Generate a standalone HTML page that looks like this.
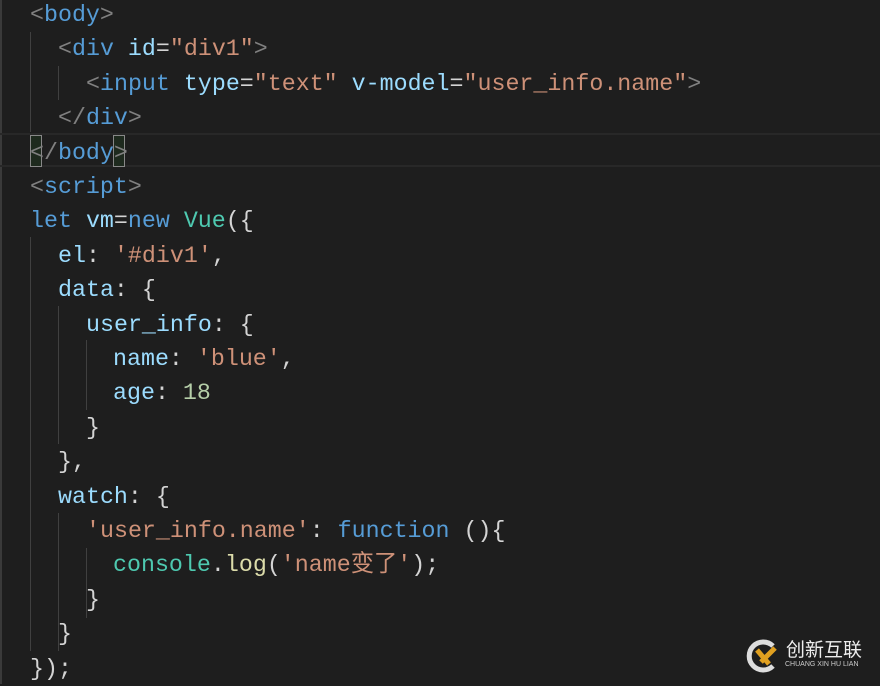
<!DOCTYPE html><html><head><meta charset="utf-8"><style>
body{margin:0;width:880px;height:684px;background:#1e1e1e;overflow:hidden;position:relative;font-family:"Liberation Mono","Noto Sans CJK SC",monospace;font-size:23.3px}
.l{position:absolute;left:30px;height:34.4px;line-height:34.4px;white-space:pre;color:#d4d4d4;margin-top:2px}
.t{color:#808080}.k{color:#569cd6}.a{color:#9cdcfe}.s{color:#ce9178}.n{color:#b5cea8}.f{color:#dcdcaa}.c{color:#4ec9b0}
.g{position:absolute;width:1px;background:#404040}
.hl{position:absolute;left:0;right:0;top:133px;height:34px;border-top:2px solid #282828;border-bottom:2px solid #282828;box-sizing:border-box}
.br{position:absolute;top:135px;width:12px;height:32px;border:1px solid #888;background:#1e2a1e;box-sizing:border-box}
</style></head><body>
<div style="position:absolute;left:0;top:0;width:2px;height:684px;background:#3a3a3a"></div>
<div class="hl"></div>
<div class="br" style="left:30px"></div><div class="br" style="left:113px"></div>
<div class="g" style="left:30px;top:32px;height:100px"></div>
<div class="g" style="left:58px;top:66px;height:34px"></div>
<div class="g" style="left:30px;top:237px;height:414px"></div>
<div class="g" style="left:58px;top:306px;height:138px"></div>
<div class="g" style="left:86px;top:340px;height:70px"></div>
<div class="g" style="left:58px;top:513px;height:138px"></div>
<div class="g" style="left:86px;top:548px;height:70px"></div>
<div class="l" style="top:-4px"><span class="t">&lt;</span><span class="k">body</span><span class="t">&gt;</span></div>
<div class="l" style="top:30.4px;left:58px"><span class="t">&lt;</span><span class="k">div</span> <span class="a">id</span>=<span class="s">"div1"</span><span class="t">&gt;</span></div>
<div class="l" style="top:64.8px;left:86px"><span class="t">&lt;</span><span class="k">input</span> <span class="a">type</span>=<span class="s">"text"</span> <span class="a">v-model</span>=<span class="s">"user_info.name"</span><span class="t">&gt;</span></div>
<div class="l" style="top:99.2px;left:58px"><span class="t">&lt;/</span><span class="k">div</span><span class="t">&gt;</span></div>
<div class="l" style="top:133.6px"><span class="t">&lt;/</span><span class="k">body</span><span class="t">&gt;</span></div>
<div class="l" style="top:168px"><span class="t">&lt;</span><span class="k">script</span><span class="t">&gt;</span></div>
<div class="l" style="top:202.4px"><span class="k">let</span> <span class="a">vm</span>=<span class="k">new</span> <span class="c">Vue</span>({</div>
<div class="l" style="top:236.8px;left:58px"><span class="a">el</span>: <span class="s">'#div1'</span>,</div>
<div class="l" style="top:271.2px;left:58px"><span class="a">data</span>: {</div>
<div class="l" style="top:305.6px;left:86px"><span class="a">user_info</span>: {</div>
<div class="l" style="top:340px;left:113px"><span class="a">name</span>: <span class="s">'blue'</span>,</div>
<div class="l" style="top:374.4px;left:113px"><span class="a">age</span>: <span class="n">18</span></div>
<div class="l" style="top:408.8px;left:86px">}</div>
<div class="l" style="top:443.2px;left:58px">},</div>
<div class="l" style="top:477.6px;left:58px"><span class="a">watch</span>: {</div>
<div class="l" style="top:512px;left:86px"><span class="s">'user_info.name'</span>: <span class="k">function</span> (){</div>
<div class="l" style="top:546.4px;left:113px"><span class="c">console</span>.<span class="f">log</span>(<span class="s">'name变了'</span>);</div>
<div class="l" style="top:580.8px;left:86px">}</div>
<div class="l" style="top:615.2px;left:58px">}</div>
<div class="l" style="top:649.6px">});</div>
<svg style="position:absolute;left:745px;top:638px" width="36" height="36" viewBox="0 0 36 36"><path d="M28 8A14 14 0 1 0 28 28" fill="none" stroke="#ddd" stroke-width="5"/><path d="M12 12L24 26M30 10L16 24" stroke="#e0a020" stroke-width="5"/></svg>
<div style="position:absolute;left:786px;top:638px;color:#eee;font-family:'Noto Sans CJK SC',sans-serif;font-size:19px;line-height:22px">创新互联</div>
<div style="position:absolute;left:785px;top:661px;color:#ccc;font-family:'Liberation Sans',sans-serif;font-size:7px;white-space:nowrap">CHUANG XIN HU LIAN</div>
</body></html>
